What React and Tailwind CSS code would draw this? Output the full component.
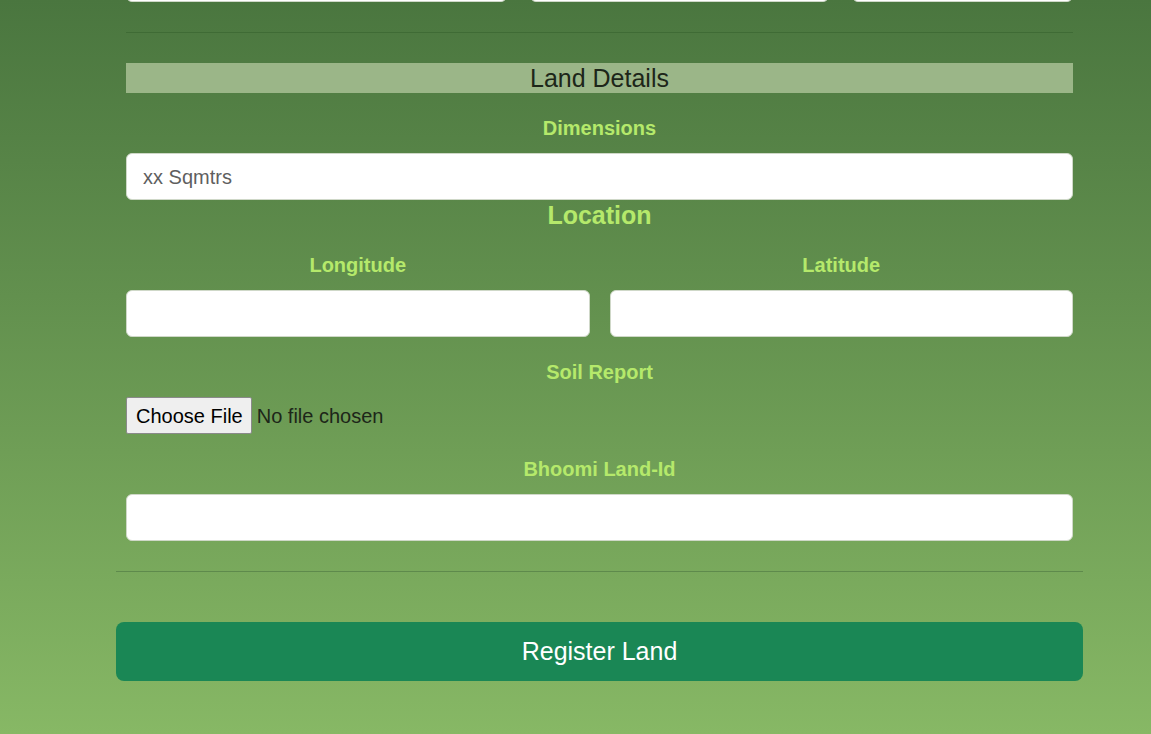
export default function App() {
  const label = "block text-center text-[20px] leading-[23px] font-bold text-[#b5e96b]";
  const base = "block h-[47px] rounded-[6px] border border-[#cfd8c8] bg-white px-4 text-[20px] text-[#333] placeholder:text-[#5f5f5f] outline-none";
  const input = base + " w-full";
  return (
    <div className="w-full h-[734px] overflow-hidden bg-linear-to-b from-[#4a763f] to-[#87b865] font-['Liberation_Sans',Arial,sans-serif]">
      <div className="mx-[116px] w-[967px]">
        <div className="px-[10px]">
          <div className="-mt-[45px] flex gap-[23px]">
            <input className={base + " w-[381px] shrink-0"} />
            <input className={base + " w-[299px] shrink-0"} />
            <input className={base + " w-[221px] shrink-0"} />
          </div>
          <div className="mt-[30px] border-t border-[#3f6b35]" />
          <div className="mt-[30px] h-[30px] bg-[#9bb688] text-center text-[25px] leading-[30px] text-[#1d2619]">
            Land Details
          </div>
          <label className={label + " mt-6 mb-[13px]"}>Dimensions</label>
          <input className={input + " pt-[2px]"} placeholder="xx Sqmtrs" />
          <h3 className="mt-px text-center text-[25px] leading-[29px] font-bold text-[#b5e96b]">Location</h3>
          <div className="grid grid-cols-2 gap-x-[20px]">
            <div>
              <label className={label + " mt-6 mb-[13px]"}>Longitude</label>
              <input className={input} />
            </div>
            <div>
              <label className={label + " mt-6 mb-[13px]"}>Latitude</label>
              <input className={input} />
            </div>
          </div>
          <label className={label + " mt-6 mb-[13px]"}>Soil Report</label>
          <div className="flex items-center h-[37px]">
            <span className="h-[37px] pl-[9px] pr-[8px] flex items-center border border-[#8a8a8a] rounded-[2px] bg-[#efefef] text-[20px] text-black">
              Choose File
            </span>
            <span className="ml-[5px] text-[20px] text-[#1d2619]">No file chosen</span>
          </div>
          <label className={label + " mt-6 mb-[13px]"}>Bhoomi Land-Id</label>
          <input className={input} />
        </div>
        <div className="mt-[30px] border-t border-[#5e8a4c]" />
        <button className="mt-[50px] w-full h-[59px] rounded-[8px] bg-[#1a8755] text-white text-[25px]">
          Register Land
        </button>
      </div>
    </div>
  );
}
